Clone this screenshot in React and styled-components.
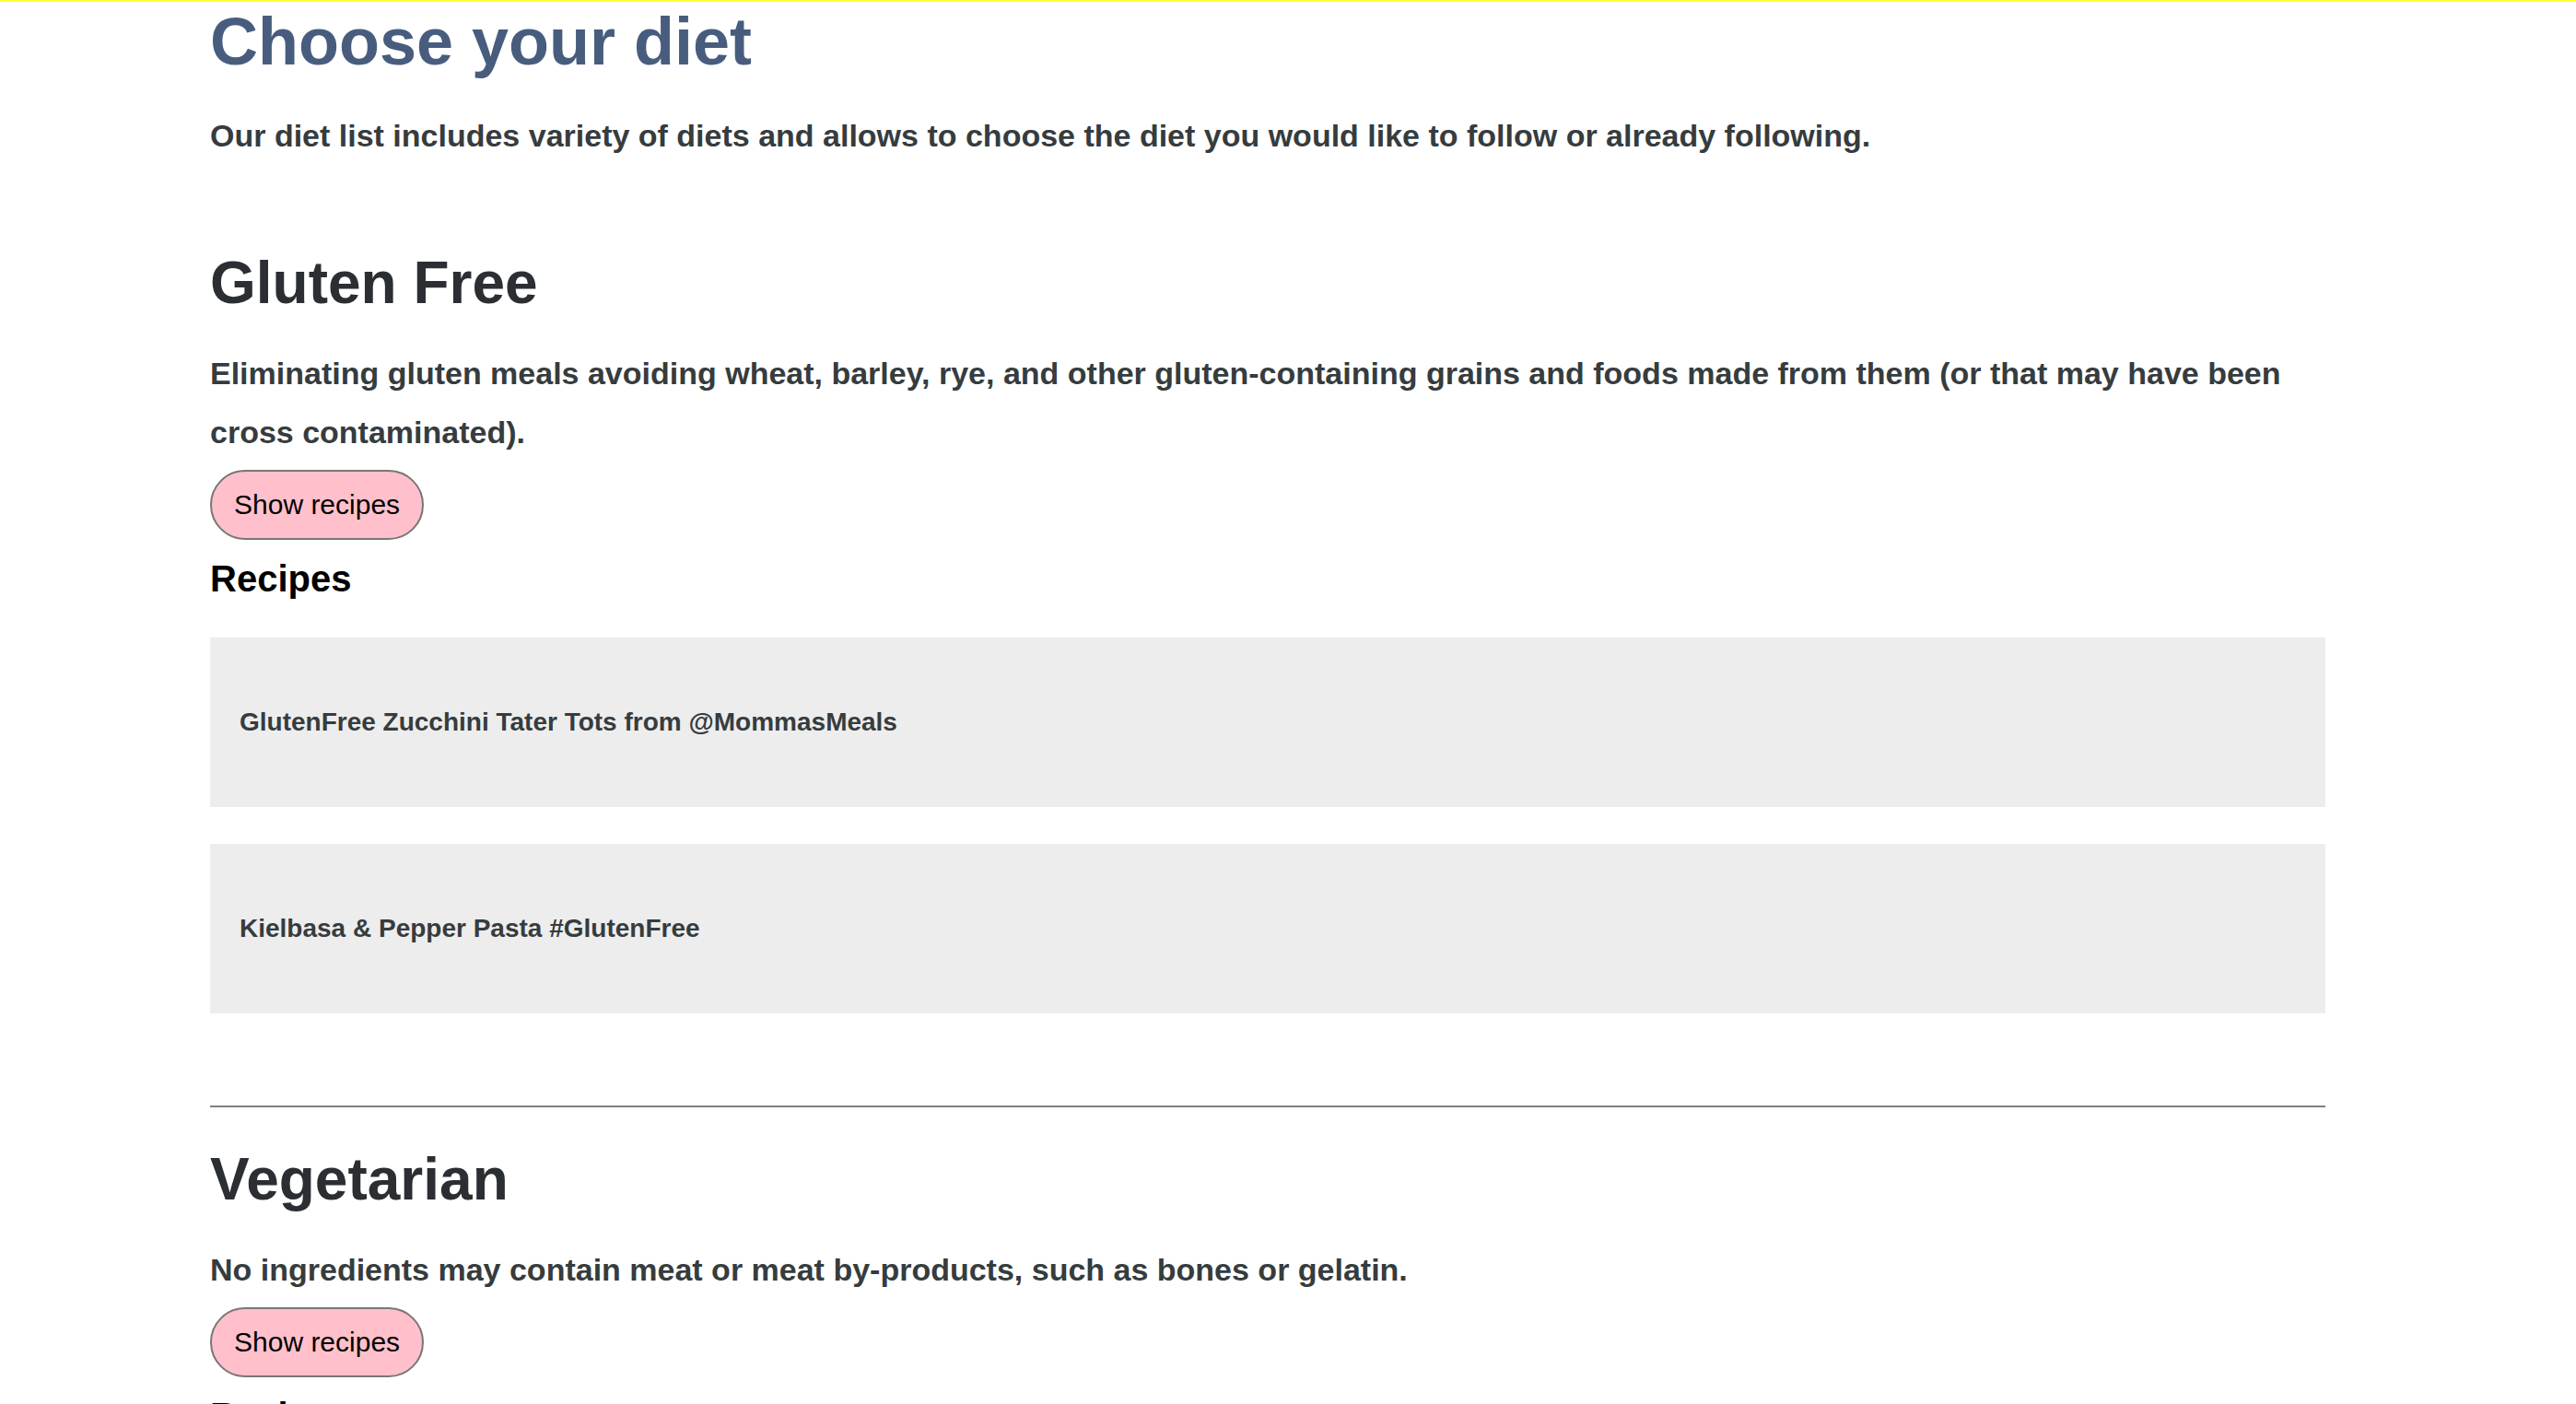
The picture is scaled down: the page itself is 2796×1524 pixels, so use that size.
import React from 'react';
import styled, { createGlobalStyle } from 'styled-components';

const GlobalStyle = createGlobalStyle`
  html, body {
    margin: 0;
    padding: 0;
    background: #ffffff;
  }
  body {
    font-family: 'Liberation Sans', Arial, Helvetica, sans-serif;
  }
`;

const Page = styled.div`
  border-top: 2px solid #ffff33;
  min-height: 100vh;
`;

const Main = styled.main`
  width: 2296px;
  margin-left: 228px;
  padding: 2px 0 80px;
`;

const Title = styled.h1`
  margin: 0 0 29px;
  font-size: 72px;
  font-weight: 700;
  line-height: normal;
  color: #485d7e;
`;

const Text = styled.p`
  margin: 0;
  font-size: 34px;
  font-weight: 700;
  line-height: 64px;
  color: #363c3e;
`;

const Intro = styled(Text)`
  margin-bottom: 50px;
`;

const Section = styled.section`
  display: flex;
  flex-direction: column;
  align-items: flex-start;
`;

const DietName = styled.h2`
  margin: 41px 0 29px;
  font-size: 64px;
  font-weight: 700;
  line-height: normal;
  color: #2b2e33;
`;

const ShowButton = styled.button`
  margin-top: 9px;
  padding: 19px 24px;
  font-family: 'Liberation Sans', Arial, sans-serif;
  font-size: 30px;
  line-height: normal;
  color: #000000;
  background: #ffc0cb;
  border: 2px solid #777777;
  border-radius: 999px;
  cursor: pointer;
`;

const RecipesTitle = styled.h3`
  margin: 20px 0 41px;
  font-size: 40px;
  font-weight: 700;
  line-height: normal;
  color: #000000;
`;

const RecipeList = styled.div`
  align-self: stretch;
  display: flex;
  flex-direction: column;
  gap: 40px;
`;

const RecipeCard = styled.div`
  height: 184px;
  padding: 0 32px;
  display: flex;
  align-items: center;
  background: #ededed;
  font-size: 28px;
  font-weight: 700;
  color: #363c3e;
`;

const Divider = styled.hr`
  align-self: stretch;
  margin: 100px 0 0;
  border: none;
  height: 2px;
  background: #808080;
`;

const diets = [
  {
    name: 'Gluten Free',
    text: 'Eliminating gluten meals avoiding wheat, barley, rye, and other gluten-containing grains and foods made from them (or that may have been cross contaminated).',
    recipes: ['GlutenFree Zucchini Tater Tots from @MommasMeals', 'Kielbasa & Pepper Pasta #GlutenFree'],
  },
  {
    name: 'Vegetarian',
    text: 'No ingredients may contain meat or meat by-products, such as bones or gelatin.',
    recipes: [],
  },
];

export default function App() {
  return (
    <Page>
      <GlobalStyle />
      <Main>
        <Title>Choose your diet</Title>
        <Intro>
          Our diet list includes variety of diets and allows to choose the diet you would like to follow or already following.
        </Intro>
        {diets.map((diet, i) => (
          <Section key={diet.name}>
            <DietName>{diet.name}</DietName>
            <Text>{diet.text}</Text>
            <ShowButton>Show recipes</ShowButton>
            <RecipesTitle>Recipes</RecipesTitle>
            {diet.recipes.length > 0 && (
              <RecipeList>
                {diet.recipes.map((r) => (
                  <RecipeCard key={r}>{r}</RecipeCard>
                ))}
              </RecipeList>
            )}
            {i < diets.length - 1 && <Divider />}
          </Section>
        ))}
      </Main>
    </Page>
  );
}
